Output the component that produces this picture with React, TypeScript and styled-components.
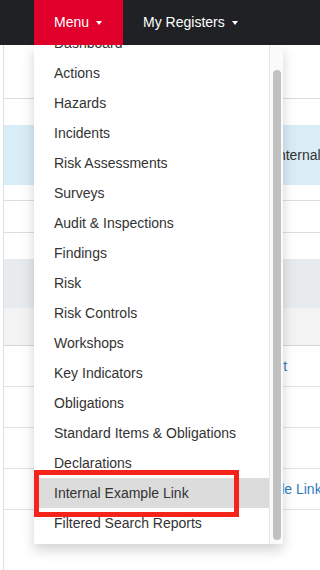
import React from 'react';
import styled, { createGlobalStyle } from 'styled-components';

const GlobalStyle = createGlobalStyle`
  html, body {
    margin: 0;
    padding: 0;
    background: #fff;
    overflow: hidden;
  }

  body {
    font-family: "Liberation Sans", Arial, Helvetica, sans-serif;
    font-size: 14px;
    color: #333;
  }
`;

const Shell = styled.div`
  position: relative;
  width: 320px;
  height: 570px;
  overflow: hidden;
  display: flex;
  flex-direction: column;
`;

const NavBar = styled.nav`
  height: 45px;
  flex: none;
  display: flex;
  padding-left: 34px;
  background: #202124;
`;

const NavItem = styled.div<{ $active?: boolean }>`
  display: flex;
  align-items: center;
  padding: 0 21px 1px 20px;
  background: ${(p) => (p.$active ? '#e1002b' : 'transparent')};
  color: #fff;
  font-size: 14px;
  white-space: nowrap;
`;

const Caret = styled.span`
  display: inline-block;
  margin-left: 7px;
  margin-top: 1px;
  border-top: 4px solid #fff;
  border-left: 3.5px solid transparent;
  border-right: 3.5px solid transparent;
`;

const Page = styled.div`
  flex: 1;
  display: flex;
  padding-left: 3px;
`;

const Frame = styled.div`
  flex: 1;
  border-left: 1px solid #dedede;
  display: flex;
  flex-direction: column;
`;

const PageHeader = styled.div`
  height: 53px;
  flex: none;
  border-bottom: 1px solid #dcdcdc;
`;

const InfoBar = styled.div`
  margin-top: 26px;
  height: 60px;
  display: flex;
  align-items: center;
  padding-left: 270px;
  background: #d9edf7;
  white-space: nowrap;
  color: #333;
`;

const Row = styled.div<{ $h: number; $bg?: string; $line?: string; $pad?: number }>`
  height: ${(p) => p.$h}px;
  flex: none;
  display: flex;
  align-items: center;
  padding-left: ${(p) => p.$pad ?? 181}px;
  background: ${(p) => p.$bg || 'transparent'};
  border-bottom: 1px solid ${(p) => p.$line || 'transparent'};
  box-sizing: border-box;
  white-space: nowrap;
`;

const TableLink = styled.span`
  color: #2f7bbf;
`;

const Dropdown = styled.div`
  position: absolute;
  top: 45px;
  left: 34px;
  width: 249px;
  height: 499px;
  display: flex;
  background: #fff;
  box-shadow: 0 6px 12px rgba(0, 0, 0, 0.175);
  overflow: hidden;
`;

const Viewport = styled.div`
  flex: 1;
  overflow: hidden;
`;

const ItemList = styled.ul`
  list-style: none;
  margin: -17px 0 0;
  padding: 0;
`;

const MenuItem = styled.li<{ $hover?: boolean }>`
  position: relative;
  height: 30px;
  line-height: 30px;
  padding-left: 20px;
  color: #333;
  font-size: 14px;
  white-space: nowrap;
  background: ${(p) => (p.$hover ? '#dcdcdc' : 'transparent')};
`;

const Callout = styled.span`
  position: absolute;
  top: -8px;
  left: 0;
  width: 205px;
  height: 47px;
  box-sizing: border-box;
  border: 5px solid #f5241b;
  pointer-events: none;
`;

const ScrollTrack = styled.div`
  width: 14px;
  flex: none;
  box-sizing: border-box;
  border-left: 1px solid #e6e6e6;
  background: #fafafa;
  display: flex;
  justify-content: center;
  padding: 25px 0 4px 1px;
`;

const ScrollThumb = styled.div`
  width: 8px;
  border-radius: 4px;
  background: #c1c1c1;
`;

const items = [
  'Dashboard',
  'Actions',
  'Hazards',
  'Incidents',
  'Risk Assessments',
  'Surveys',
  'Audit & Inspections',
  'Findings',
  'Risk',
  'Risk Controls',
  'Workshops',
  'Key Indicators',
  'Obligations',
  'Standard Items & Obligations',
  'Declarations',
  'Internal Example Link',
  'Filtered Search Reports',
];

const highlighted = 'Internal Example Link';

export default function App() {
  return (
    <>
      <GlobalStyle />
      <Shell>
        <NavBar>
          <NavItem $active>
            Menu
            <Caret />
          </NavItem>
          <NavItem>
            My Registers
            <Caret />
          </NavItem>
        </NavBar>

        <Page>
          <Frame>
            <PageHeader />
            <InfoBar>Internal Example Link</InfoBar>
            <Row $h={16} $line="#dedede" />
            <Row $h={32} $line="#dedede" />
            <Row $h={26} />
            <Row $h={49} $bg="#e8ebee" />
            <Row $h={38} $bg="#f3f3f3" $line="#d6d6d6" />
            <Row $h={41} $line="#e2e2e2" $pad={192}>
              <TableLink>Hazard Report</TableLink>
            </Row>
            <Row $h={41} $line="#e2e2e2" />
            <Row $h={41} $line="#e2e2e2" />
            <Row $h={41} $line="#e2e2e2" $pad={183}>
              <TableLink>Internal Example Link</TableLink>
            </Row>
          </Frame>
        </Page>

        <Dropdown>
          <Viewport>
            <ItemList>
              {items.map((item) => (
                <MenuItem key={item} $hover={item === highlighted}>
                  {item}
                  {item === highlighted && <Callout />}
                </MenuItem>
              ))}
            </ItemList>
          </Viewport>
          <ScrollTrack>
            <ScrollThumb />
          </ScrollTrack>
        </Dropdown>
      </Shell>
    </>
  );
}
